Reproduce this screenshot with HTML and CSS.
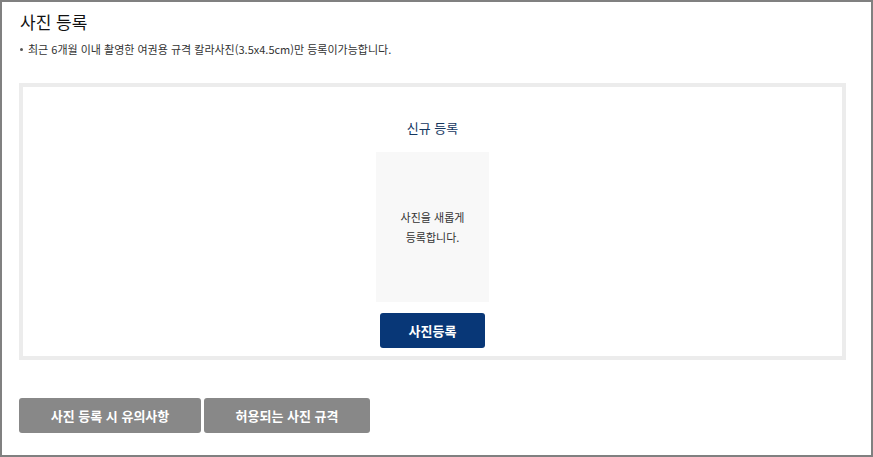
FILE: index.html
```html
<!DOCTYPE html>
<html lang="ko">
<head>
<meta charset="utf-8">
<link rel="stylesheet" href="styles.css">
</head>
<body>
<div class="page">
  <h2 class="title">사진 등록</h2>
  <ul class="notes">
    <li>최근 6개월 이내 촬영한 여권용 규격 칼라사진(3.5x4.5cm)만 등록이가능합니다.</li>
  </ul>
  <div class="panel">
    <div class="panel-title">신규 등록</div>
    <div class="photo">사진을 새롭게<br>등록합니다.</div>
    <button class="btn-primary" type="button">사진등록</button>
  </div>
  <div class="actions">
    <button class="btn-gray btn-wide" type="button">사진 등록 시 유의사항</button>
    <button class="btn-gray btn-narrow" type="button">허용되는 사진 규격</button>
  </div>
</div>
</body>
</html>
```
FILE: styles.css
```css
* { box-sizing: border-box; }
html, body { margin: 0; padding: 0; background: #fff; }
body {
  font-family: "Noto Sans CJK KR", "Noto Sans", sans-serif;
  color: #222;
}
.page {
  width: 873px;
  height: 457px;
  border: 2px solid #808080;
  padding: 8px 25px 0 17px;
}
.title {
  margin: 0 0 0 1px;
  font-size: 17px;
  font-weight: 400;
  line-height: 24px;
  color: #111;
}
.notes {
  list-style: none;
  margin: 6px 0 0 0;
  padding: 0;
}
.notes li {
  position: relative;
  padding-left: 9px;
  font-size: 11px;
  line-height: 18px;
  color: #333;
}
.notes li::before {
  content: "";
  position: absolute;
  left: 1px;
  top: 8px;
  width: 3px;
  height: 3px;
  border-radius: 50%;
  background: #555;
}
.panel {
  margin-top: 25px;
  height: 277px;
  border: 4px solid #ececec;
  padding-top: 31px;
  display: flex;
  flex-direction: column;
  align-items: center;
}
.panel-title {
  font-size: 13px;
  line-height: 20px;
  color: #15375f;
}
.photo {
  margin-top: 14px;
  width: 113px;
  height: 150px;
  background: #f8f8f8;
  display: flex;
  align-items: center;
  justify-content: center;
  text-align: center;
  font-size: 11px;
  line-height: 20px;
  color: #333;
}
.btn-primary {
  margin-top: 11px;
  width: 105px;
  height: 35px;
  border: 0;
  border-radius: 3px;
  background: #083777;
  color: #fff;
  font-family: inherit;
  font-size: 13px;
  font-weight: 700;
  padding: 0;
}
.actions {
  margin-top: 38px;
  display: flex;
  gap: 3px;
}
.btn-gray {
  height: 35px;
  border: 0;
  border-radius: 3px;
  background: #888;
  color: #fff;
  font-family: inherit;
  font-size: 13px;
  font-weight: 700;
  padding: 0;
}
.btn-wide { width: 182px; }
.btn-narrow { width: 166px; }
```
